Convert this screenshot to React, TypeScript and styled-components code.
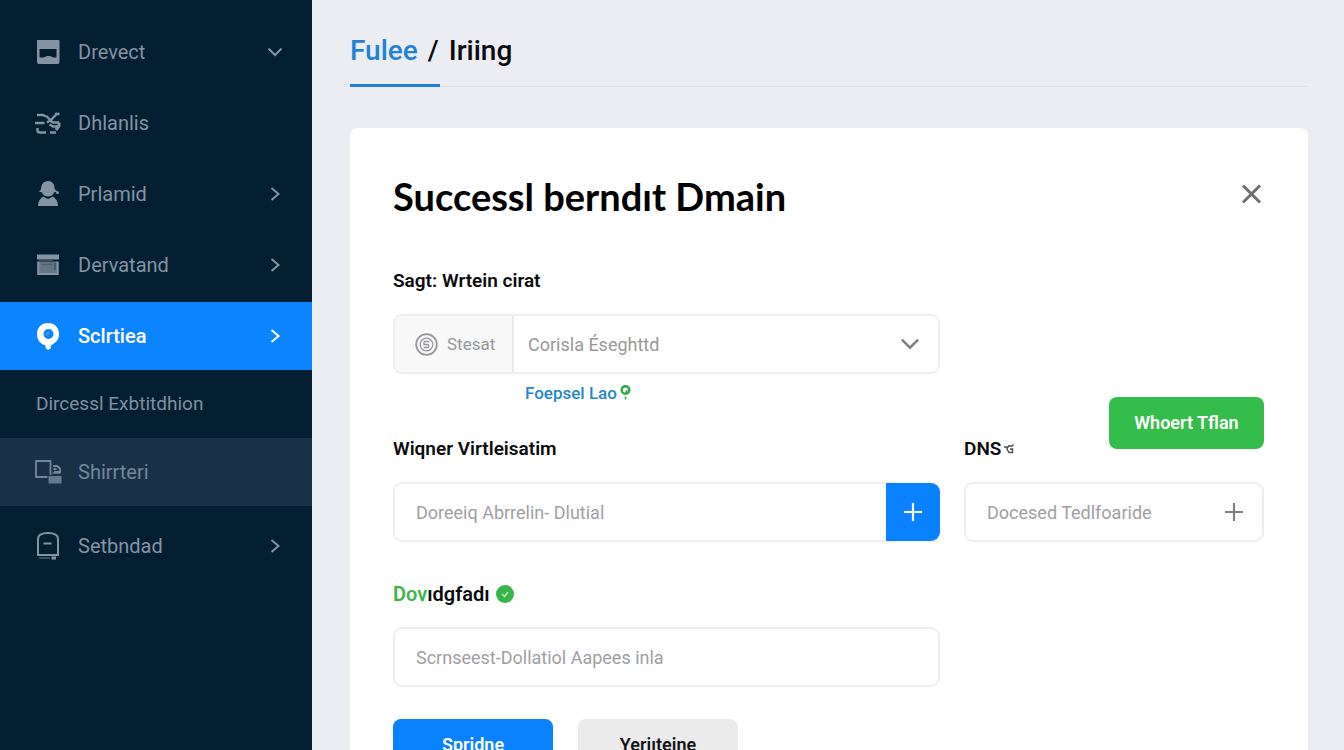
import React from "react";
import styled, { createGlobalStyle, css } from "styled-components";

const GlobalStyle = createGlobalStyle`
  * { box-sizing: border-box; }
  body { margin: 0; background: #ebedf2; font-family: Roboto, "Liberation Sans", sans-serif; color: #0b0b0d; }
  button, input, select { font-family: inherit; margin: 0; }
`;

const Page = styled.div`
  display: grid;
  grid-template-columns: 312px minmax(0, 1fr);
  min-height: 100vh;
`;

const Sidebar = styled.nav`
  background: #041e32;
  padding: 18px 0;
`;

const NavGroup = styled.div<{ $gap?: number; $top?: number }>`
  display: flex;
  flex-direction: column;
  gap: ${(p) => p.$gap ?? 0}px;
  margin-top: ${(p) => p.$top ?? 0}px;
`;

type Tone = "plain" | "active" | "sub" | "muted";

const tones = {
  plain: css`background: transparent; color: #8494a3;`,
  active: css`background: #0d84ff; color: #ffffff; font-weight: 500;`,
  sub: css`background: transparent; color: #8090a0; font-size: 19px;`,
  muted: css`background: #183147; color: #74879a;`,
};

const NavLink = styled.a<{ $tone: Tone }>`
  display: flex;
  align-items: center;
  gap: 18px;
  height: 68px;
  padding: 0 29px 0 36px;
  font-size: 20px;
  line-height: 24px;
  text-decoration: none;
  ${(p) => tones[p.$tone]}
  > svg { flex: none; }
`;

const NavIcon = styled.span`
  display: flex;
  justify-content: center;
  width: 24px;
  svg { flex: none; }
`;

const NavLabel = styled.span`
  flex: 1;
`;

const Main = styled.main`
  display: flex;
  flex-direction: column;
  padding: 33px 36px 0 38px;
`;

const Breadcrumb = styled.div`
  display: flex;
  gap: 10px;
  height: 54px;
  border-bottom: 1px solid #dfe2e8;
  font-size: 28px;
  line-height: 36px;
  font-weight: 500;
`;

const CrumbLink = styled.a`
  color: #1f82d6;
  text-decoration: none;
`;

const CrumbBar = styled.div`
  width: 90px;
  height: 3px;
  margin-top: -3px;
  background: #1f82d6;
`;

const Card = styled.section`
  flex: 1;
  margin-top: 41px;
  padding: 42px 44px 48px 43px;
  background: #ffffff;
  border-radius: 8px 8px 0 0;
`;

const CardHeader = styled.header`
  display: flex;
  align-items: center;
  justify-content: space-between;
  height: 52px;
`;

const Title = styled.h1`
  margin: 0;
  font-family: Lato, "Noto Sans", sans-serif;
  font-size: 38px;
  line-height: 52px;
  font-weight: 700;
  color: #000000;
`;

const IconButton = styled.button`
  display: flex;
  margin-bottom: 4px;
  padding: 0;
  border: 0;
  background: none;
  color: #707070;
`;

const Columns = styled.form`
  display: grid;
  grid-template-columns: minmax(0, 547fr) minmax(0, 300fr);
  gap: 24px;
  margin-top: 47px;
`;

const Column = styled.div<{ $top?: number }>`
  padding-top: ${(p) => p.$top ?? 0}px;
`;

const Label = styled.label`
  display: block;
  font-size: 19px;
  line-height: 24px;
  font-weight: 600;
  color: #0b0b0d;
`;

const Control = styled.div`
  display: flex;
  align-items: center;
  height: 60px;
  margin-top: 21px;
  border: 2px solid #eeeeef;
  border-radius: 9px;
  background: #ffffff;
`;

const fieldText = css`
  flex: 1;
  min-width: 0;
  height: 100%;
  border: 0;
  outline: 0;
  background: none;
  font-size: 18px;
  color: #98989b;
`;

const Input = styled.input`
  ${fieldText}
  padding: 0 21px;
  &::placeholder { color: #a0a0a3; opacity: 1; }
`;

const Select = styled.select`
  ${fieldText}
  appearance: none;
  padding: 0 14px;
`;

const Prefix = styled.span`
  display: flex;
  align-items: center;
  gap: 9px;
  width: 119px;
  height: 100%;
  padding-left: 20px;
  border-right: 2px solid #eaeaeb;
  border-radius: 7px 0 0 7px;
  background: #f8f8f9;
  font-size: 17px;
  color: #98989b;
`;

const Suffix = styled.span`
  display: flex;
  padding-right: 18px;
  color: #808083;
`;

const AddButton = styled.button`
  display: flex;
  align-items: center;
  justify-content: center;
  align-self: stretch;
  width: 54px;
  margin: -1px -2px -1px 0;
  border: 0;
  border-radius: 0 9px 9px 0;
  background: #0a82ff;
  color: #ffffff;
`;

const HelpLink = styled.a`
  display: flex;
  align-items: center;
  gap: 3px;
  margin: 7px 0 32px 132px;
  font-size: 17px;
  line-height: 24px;
  font-weight: 500;
  color: #2286d0;
  text-decoration: none;
`;

const StatusLabel = styled(Label)`
  display: flex;
  align-items: center;
  gap: 6px;
  margin-top: 40px;
  font-size: 20px;
`;

const Green = styled.span`
  color: #3db54a;
`;

const Actions = styled.div`
  display: flex;
  gap: 25px;
  margin-top: 32px;
`;

const Button = styled.button<{ $kind: "primary" | "neutral" | "success" }>`
  height: 52px;
  padding: 0;
  width: ${(p) => (p.$kind === "success" ? 155 : 160)}px;
  border: 0;
  border-radius: 8px;
  font-size: 18px;
  line-height: 24px;
  font-weight: 600;
  color: ${(p) => (p.$kind === "neutral" ? "#151517" : "#ffffff")};
  background: ${(p) => ({ primary: "#0a82ff", neutral: "#ebebec", success: "#34bd4b" })[p.$kind]};
`;

const SideHeader = styled.div`
  display: flex;
  justify-content: space-between;
  align-items: flex-end;
  height: 64px;
  ${Button} { align-self: flex-start; }
`;

const DnsLabel = styled(Label)`
  display: flex;
  align-items: center;
  gap: 3px;
`;

const Chevron = ({ down, size = 16 }: { down?: boolean; size?: number }) => (
  <svg width={size} height={size} viewBox="0 0 16 16" fill="none" stroke="currentColor" strokeWidth="2">
    {down ? <path d="M1.500 4.500 8 11l6.500-6.500" /> : <path d="M4.500 2l7 6-7 6" />}
  </svg>
);

const Plus = () => (
  <svg width="20" height="20" viewBox="0 0 20 20" fill="none" stroke="currentColor" strokeWidth="2.200">
    <path d="M10 1v18M1 10h18" />
  </svg>
);

const PanelIcon = () => (
  <svg width="24" height="24" viewBox="0 0 24 24" fill="currentColor">
    <path fillRule="evenodd" d="M1.500 0h21q1 0 1 1v21q0 2-2 2H3q-2 0-2-2V1q0-1 .5-1ZM3.500 9v8.500h4L11 16h3l3.500 1.500h3V9Z" />
  </svg>
);

const FlowIcon = () => (
  <svg width="26" height="24" viewBox="0 0 26 24" fill="none" stroke="currentColor" strokeWidth="2.400">
    <path d="M2 4h6l3 1.500M0 12h9.500M2.500 17v2.500q0 2 2.500 2h6M11.500 5l4 4.500 7-7.500M20 3h4.500M24 11.500h-6l-3-2-3 2M14.500 13.500l3.500 2h5M15 21.500h6" />
    <path d="M24 11.500v3.500l-3 4" strokeWidth="3" />
  </svg>
);

const PersonIcon = () => (
  <svg width="24" height="26" viewBox="0 0 24 26" fill="currentColor">
    <path d="M12 0c4 0 6.500 3 6.500 6.500l.5 2 2.500 2-3.500 1c-1 2.500-3 4-6 4s-5-1.500-6-4l-3-1 2-2C5 3.500 7.500 0 12 0Z" />
    <path d="m7 15.500 5 2.500 5-2.500c3 2 5 5 5 9.500H2c0-4.500 2-7.500 5-9.500Z" />
    <circle cx="21.500" cy="11.500" r="1.500" />
  </svg>
);

const DrawerIcon = () => (
  <svg width="24" height="22" viewBox="0 0 24 22" fill="none" stroke="currentColor">
    <path d="M2 1.500h20v3H2Z" fill="currentColor" strokeWidth="2" />
    <path d="M2.200 7.500v12.500h19.500V7.500" fill="currentColor" fillOpacity=".75" strokeWidth="2" />
    <path d="M3 6.700h14M19 9v7" stroke="#34495b" strokeWidth="1.200" />
    <path d="M5 10.500h12" stroke="#4d6172" strokeWidth="1.500" />
  </svg>
);

const PinIcon = () => (
  <svg width="24" height="28" viewBox="0 0 24 28" fill="currentColor">
    <path fillRule="evenodd" d="M12 1c6.500 0 11 4.500 11 11 0 5-2.500 8-6.500 10.500L14.500 24l.5 2-3 2-2.500-2v-2.500C4.500 22 1 18 1 12 1 5.500 5.500 1 12 1Zm.5 6a5 5 0 1 0 0 10 5 5 0 0 0 0-10Z" />
    <path d="M13 9.500a3.500 3.500 0 0 0-3.500 4l4-1Z" fill="#3f98f7" />
  </svg>
);

const DevicesIcon = () => (
  <svg width="27" height="24" viewBox="0 0 27 24" fill="none" stroke="currentColor" strokeWidth="1.800">
    <path d="M12.500 17H1V1h14.500v14M18 6h4l3 2.500v3.500h-6M18.500 9h3" />
    <path d="M13.500 16H26.500v7.500H13.500Z" fill="currentColor" fillOpacity=".85" stroke="none" />
    <path d="M17.500 13h8" strokeWidth="1.400" />
  </svg>
);

const BagIcon = () => (
  <svg width="24" height="28" viewBox="0 0 24 28" fill="none" stroke="currentColor" strokeWidth="2">
    <path d="M2 23V7q0-6 10-6t10 6v16ZM7.500 11.500h8" />
    <path d="M3 26h11" strokeWidth="1.200" strokeOpacity=".7" />
    <path d="M15.500 26H20" strokeWidth="3" />
  </svg>
);

const CoinIcon = () => (
  <svg width="23" height="23" viewBox="0 0 23 23" fill="none" stroke="currentColor" strokeWidth="1.800">
    <circle cx="11.500" cy="11.500" r="10.300" />
    <circle cx="11.500" cy="11.500" r="6.300" strokeWidth="1.300" />
    <path d="M9 8.500h5.500M9 8.500v3h4q1.500 1.500 0 3H9" strokeWidth="1.300" />
  </svg>
);

const TipIcon = () => (
  <svg width="11" height="16" viewBox="0 0 11 16" fill="none">
    <circle cx="5.500" cy="5" r="3.800" stroke="#2fa544" strokeWidth="2.400" />
    <path d="M7 5 5.500 9M5.500 11.500v3" stroke="#2fa544" strokeWidth="1.600" />
  </svg>
);

const CheckIcon = () => (
  <svg width="18" height="18" viewBox="0 0 18 18" fill="none">
    <circle cx="9" cy="9" r="9" fill="#36b549" />
    <path d="m6 9 2.500 2.500 3.500-4.500" stroke="#b5ebbc" strokeWidth="1.500" />
  </svg>
);

const HookIcon = () => (
  <svg width="10" height="12" viewBox="0 0 10 12" fill="none" stroke="#4c4c50" strokeWidth="1.400">
    <path d="M0 4h4M9.500 1.500 8 3H4.500L3 6l2 3.500h3.500V6H6" />
  </svg>
);

const CloseIcon = () => (
  <svg width="24" height="24" viewBox="0 0 24 24" fill="none" stroke="currentColor" strokeWidth="3">
    <path d="m3 3.500 17 17M20 3.500l-17 17" />
  </svg>
);

interface NavItemProps {
  label: string;
  icon?: React.ReactNode;
  tone?: Tone;
  arrow?: "down" | "right";
}

const NavItem = ({ label, icon, tone = "plain", arrow }: NavItemProps) => (
  <NavLink href="#" $tone={tone}>
    {icon && <NavIcon>{icon}</NavIcon>}
    <NavLabel>{label}</NavLabel>
    {arrow && <Chevron down={arrow === "down"} />}
  </NavLink>
);

export default function App() {
  return (
    <>
      <GlobalStyle />
      <Page>
        <Sidebar>
          <NavGroup $gap={3}>
            <NavItem label="Drevect" icon={<PanelIcon />} arrow="down" />
            <NavItem label="Dhlanlis" icon={<FlowIcon />} />
            <NavItem label="Prlamid" icon={<PersonIcon />} arrow="right" />
            <NavItem label="Dervatand" icon={<DrawerIcon />} arrow="right" />
            <NavItem label="Sclrtiea" icon={<PinIcon />} tone="active" arrow="right" />
          </NavGroup>
          <NavGroup>
            <NavItem label="Dircessl Exbtitdhion" tone="sub" />
            <NavItem label="Shirrteri" icon={<DevicesIcon />} tone="muted" />
          </NavGroup>
          <NavGroup $top={6}>
            <NavItem label="Setbndad" icon={<BagIcon />} arrow="right" />
          </NavGroup>
        </Sidebar>
        <Main>
          <Breadcrumb>
            <CrumbLink href="#">Fulee</CrumbLink>
            <span>/</span>
            <span>Iriing</span>
          </Breadcrumb>
          <CrumbBar />
          <Card>
            <CardHeader>
              <Title>Successl berndıt Dmain</Title>
              <IconButton type="button" aria-label="Close"><CloseIcon /></IconButton>
            </CardHeader>
            <Columns onSubmit={(e) => e.preventDefault()}>
              <Column>
                <Label htmlFor="source">Sagt: Wrtein cirat</Label>
                <Control>
                  <Prefix><CoinIcon />Stesat</Prefix>
                  <Select id="source" defaultValue="a">
                    <option value="a">Corisla Éseghttd</option>
                  </Select>
                  <Suffix><Chevron down size={20} /></Suffix>
                </Control>
                <HelpLink href="#">Foepsel Lao<TipIcon /></HelpLink>
                <Label htmlFor="owner">Wiqner Virtleisatim</Label>
                <Control>
                  <Input id="owner" placeholder="Doreeiq Abrrelin- Dlutial" />
                  <AddButton type="button" aria-label="Add"><Plus /></AddButton>
                </Control>
                <StatusLabel htmlFor="status">
                  <span><Green>Dov</Green>ıdgfadı</span>
                  <CheckIcon />
                </StatusLabel>
                <Control>
                  <Input id="status" placeholder="Scrnseest-Dollatiol Aapees inla" />
                </Control>
                <Actions>
                  <Button type="submit" $kind="primary">Spridne</Button>
                  <Button type="button" $kind="neutral">Yeriıteine</Button>
                </Actions>
              </Column>
              <Column $top={128}>
                <SideHeader>
                  <DnsLabel htmlFor="dns">DNS<HookIcon /></DnsLabel>
                  <Button type="button" $kind="success">Whoert Tflan</Button>
                </SideHeader>
                <Control>
                  <Input id="dns" placeholder="Docesed Tedlfoaride" />
                  <Suffix><Plus /></Suffix>
                </Control>
              </Column>
            </Columns>
          </Card>
        </Main>
      </Page>
    </>
  );
}
